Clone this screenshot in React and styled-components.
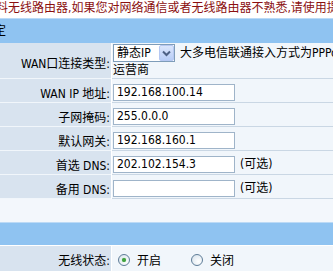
import React from 'react';
import styled, { createGlobalStyle } from 'styled-components';

const Global = createGlobalStyle`
  html, body { margin: 0; padding: 0; background: #fff; overflow: hidden; }
  body {
    font-family: "DejaVu Sans Condensed", "DejaVu Sans", "Noto Sans CJK SC", sans-serif;
    font-size: 12px;
    color: #000;
  }
`;

const Viewport = styled.div`
  width: 333px;
  height: 271px;
  overflow: hidden;
`;

const Page = styled.div`
  width: 560px;
  margin-left: -30px;
`;

const Notice = styled.div`
  height: 18px;
  line-height: 16px;
  padding-left: 14px;
  color: #8b1010;
  white-space: nowrap;
`;

const SectionBar = styled.div`
  height: ${(p) => p.$h}px;
  line-height: ${(p) => p.$h}px;
  border-top: 1px solid #bcdaf6;
  background: #8fc3f1;
  padding-left: 12px;
  white-space: nowrap;
`;

const Row = styled.div`
  display: grid;
  grid-template-columns: 141px 1fr;
  column-gap: 1px;
  background: #fff;
  border-top: ${(p) => (p.$topLine ? '1px solid #fff' : '0')};
`;

const Label = styled.div`
  height: ${(p) => p.$h}px;
  box-sizing: border-box;
  padding: ${(p) => p.$pt}px 1px 0 0;
  display: flex;
  align-items: center;
  justify-content: flex-end;
  background: #d8e3ef;
  border-bottom: ${(p) => (p.$noLine ? '0' : '1px solid #f1f6fb')};
  white-space: nowrap;
`;

const Value = styled.div`
  height: ${(p) => p.$h}px;
  box-sizing: border-box;
  padding: ${(p) => p.$pt}px 0 0 ${(p) => p.$pl}px;
  background: #f1f6fb;
  border-bottom: ${(p) => (p.$noLine ? '0' : '1px solid #cad7e4')};
  white-space: nowrap;
`;

const Line = styled.div`
  display: flex;
  align-items: center;
  height: ${(p) => p.$h}px;
  line-height: ${(p) => p.$h}px;
`;

const SelectBox = styled.div`
  display: flex;
  box-sizing: border-box;
  width: 62px;
  height: 18px;
  border: 1px solid #7f9db9;
  background: #fff;
`;

const SelectText = styled.span`
  flex: 1;
  padding-left: 3px;
  line-height: 16px;
`;

const SelectButton = styled.span`
  box-sizing: border-box;
  width: 15px;
  height: 16px;
  display: flex;
  align-items: center;
  justify-content: center;
  border: 1px solid #b6c8f2;
  border-radius: 2px;
  background: linear-gradient(#dbe6fc, #b7cdf7);
`;

const Hint = styled.span`
  margin-left: ${(p) => p.$ml}px;
`;

const TextInput = styled.input`
  box-sizing: border-box;
  width: 122px;
  height: 17px;
  margin: 0;
  padding: 0 0 0 3px;
  border: 1px solid #9fb4c9;
  background: #fff;
  font: inherit;
  color: #000;
  outline: none;
`;

const Blank = styled.div`
  height: 23px;
  background: #f3f7fc;
`;

const RadioGroup = styled.div`
  display: flex;
  align-items: center;
  height: 100%;
`;

const RadioItem = styled.label`
  display: flex;
  align-items: center;
  margin-right: ${(p) => p.$mr}px;
`;

const RadioCircle = styled.span`
  box-sizing: border-box;
  width: 12px;
  height: 12px;
  border-radius: 50%;
  border: 1px solid #5f7d98;
  background: radial-gradient(circle at 65% 65%, #ffffff 0%, #e6edf3 60%, #cfdae5 100%);
  display: flex;
  align-items: center;
  justify-content: center;
  margin-right: 7px;
`;

const RadioDot = styled.span`
  width: 4px;
  height: 4px;
  border-radius: 50%;
  background: #3fa13f;
  box-shadow: 0 0 1px #6cc06c;
`;

const Chevron = () => (
  <svg width="9" height="7" viewBox="0 0 9 7">
    <path d="M1 1.5 L4.5 5 L8 1.5" fill="none" stroke="#4d6185" strokeWidth="2" />
  </svg>
);

const Radio = ({ checked, children, mr }) => (
  <RadioItem $mr={mr}>
    <RadioCircle>{checked && <RadioDot />}</RadioCircle>
    {children}
  </RadioItem>
);

const fields = [
  { label: 'WAN IP 地址:', value: '192.168.100.14' },
  { label: '子网掩码:', value: '255.0.0.0' },
  { label: '默认网关:', value: '192.168.160.1' },
  { label: '首选 DNS:', value: '202.102.154.3', hint: '(可选)' },
  { label: '备用 DNS:', value: '', hint: '(可选)' },
];

export default function App() {
  return (
    <Viewport>
      <Global />
      <Page>
        <Notice>资料无线路由器,如果您对网络通信或者无线路由器不熟悉,请使用提示向导进行设置。</Notice>
        <SectionBar $h={24}>设定</SectionBar>

        <Row>
          <Label $h={36} $pt={4}>WAN口连接类型:</Label>
          <Value $h={36} $pt={1} $pl={1}>
            <Line $h={18}>
              <SelectBox>
                <SelectText>静态IP</SelectText>
                <SelectButton>
                  <Chevron />
                </SelectButton>
              </SelectBox>
              <Hint $ml={5}>大多电信联通接入方式为PPPoE,具体请咨询当地</Hint>
            </Line>
            <Line $h={16}>运营商</Line>
          </Value>
        </Row>

        {fields.map((f) => (
          <Row key={f.label}>
            <Label $h={24} $pt={4}>{f.label}</Label>
            <Value $h={24} $pt={5} $pl={1}>
              <Line $h={17}>
                <TextInput defaultValue={f.value} readOnly />
                {f.hint && <Hint $ml={5}>{f.hint}</Hint>}
              </Line>
            </Value>
          </Row>
        ))}

        <Blank />
        <SectionBar $h={22} />

        <Row $topLine>
          <Label $h={27} $pt={0} $noLine>无线状态:</Label>
          <Value $h={27} $pt={0} $pl={6} $noLine>
            <RadioGroup>
              <Radio checked mr={30}>开启</Radio>
              <Radio>关闭</Radio>
            </RadioGroup>
          </Value>
        </Row>
      </Page>
    </Viewport>
  );
}
